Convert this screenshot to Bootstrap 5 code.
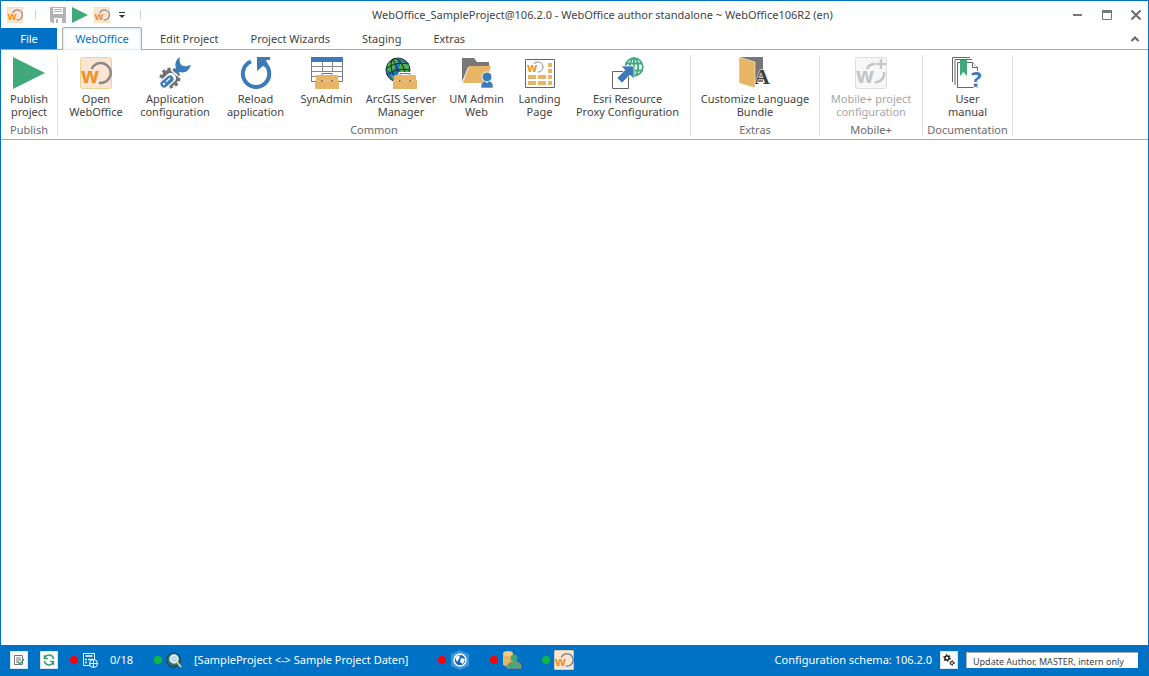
<!DOCTYPE html>
<html lang="en">
<head>
<meta charset="utf-8">
<meta name="viewport" content="width=device-width, initial-scale=1">
<title>WebOffice author standalone</title>
<link href="https://cdn.jsdelivr.net/npm/bootstrap@5.3.0/dist/css/bootstrap.min.css" rel="stylesheet">
<style>
:root { --brand: #0072c6; --line: #ababab; --ink: #444; }
body { font-family: "Noto Sans", "Open Sans", sans-serif; font-size: 11px; line-height: 16px; color: var(--ink); }
.app-window { border: 1px solid var(--brand); border-bottom: 0; min-height: 100vh; }
svg { display: block; flex: none; }
button { color: inherit; background: none; border: 0; padding: 0; line-height: inherit; }

.title-bar { height: 27px; padding: 0 6px; }
.quick-tools { gap: 6px; }
.quick-sep { width: 1px; height: 9px; background: #d0d0d0; margin: 0 6px; }
.save-btn { margin-left: 2px; }
.window-tools { gap: 17px; padding-left: 14px; }

.ribbon-tabs { height: 22px; border-bottom: 1px solid var(--line); }
.ribbon-tabs .nav-link { height: 22px; font-size: 11px; line-height: 22px; padding: 0 16px; color: var(--ink); border: 0; }
.ribbon-tabs .file-tab { background: var(--brand); color: #fff; width: 56px; height: 21px; padding: 0; text-align: center; border-radius: 0; margin-right: 5px; align-self: end; }
.ribbon-tabs .active { height: 23px; width: 80px; padding: 0; text-align: center; color: var(--brand); background: #fff; border: 1px solid var(--line); border-bottom: 0; border-radius: 3px 3px 0 0; margin: -1px 2px -1px 0; box-shadow: inset 0 0 2px 1px #d3ecfa; }

.ribbon { height: 90px; border-bottom: 1px solid var(--line); padding: 5px 0 3px; line-height: 13px; }
.ribbon-group { display: grid; grid-template-rows: 1fr 13px; border-right: 1px solid #e0e0e0; }
.ribbon-caption { text-align: center; color: #6a6a6a; }
.ribbon-items { display: grid; justify-content: center; }
.publish-group { width: 57px; }
.common-group { width: 633px; }
.common-group .ribbon-items { grid-template-columns: 71px 87px 74px 68px 81px 70px 56px 120px; }
.language-group { width: 129px; }
.mobile-group { width: 103px; }
.manual-group { width: 90px; }
.ribbon-btn { display: flex; flex-direction: column; align-items: center; justify-content: start; gap: 3px; padding-top: 2px; white-space: nowrap; }
.ribbon-btn:disabled { color: #a6a6a6; }

.status-bar { height: 31px; background: var(--brand); color: #fff; padding: 0 10px 1px 9px; }
.status-left { gap: 12px; }
.status-item { gap: 4px; }
.status-item + .status-item, .status-text + .status-item { margin-left: 8px; }
.status-text { min-width: 24px; }
.status-project { min-width: 224px; }
.status-right { gap: 8px; }
.status-box { width: 18px; height: 18px; background: #fff; border: 1px solid #d5e5f2; display: grid; place-items: center; color: #222; }
.dot { width: 8px; height: 8px; border-radius: 50%; background: #f00; flex: none; }
.dot-ok { background: #0db83c; }
.update-box { width: 172px; height: 16px; border: 1px solid #ababab; border-width: 1px 0 0 1px; padding: 2px 0 0 6px; font-size: 9px; line-height: 13px; color: var(--ink); background: #fff; }
</style>
</head>
<body>
<svg width="0" height="0" class="position-absolute" aria-hidden="true">
  <symbol id="logo" viewBox="0 0 32 32">
    <rect x=".5" y=".5" width="31" height="31" rx="2" fill="#fce5d3" stroke="#efd092"/>
    <path d="M11.500 12A10 10 0 1 1 19 25.800" fill="none" stroke="#8b8884" stroke-width="2.500"/>
    <text x="1" y="26" font-size="21" font-weight="700" fill="#ed922b">w</text>
  </symbol>
  <symbol id="play" viewBox="0 0 32 32"><path d="M0 0 32 16 0 32z" fill="#40a97c"/></symbol>
  <symbol id="case" viewBox="0 0 24 17">
    <path d="M7 3V1.500h10V3" fill="none" stroke="#fff" stroke-width="3"/>
    <path d="M7 3V1.500h10V3" fill="none" stroke="#777"/>
    <path d="M2 3h20q1 0 1 1v4h1v9H0V8h1V4q0-1 1-1z" fill="#e8b465"/>
    <path d="M1 8.500h22" stroke="#f3d29c" stroke-width=".5"/><path d="M6 8h1.500v1.500H6zM16.500 8H18v1.500h-1.500z" fill="#666"/>
  </symbol>
  <symbol id="webglobe" viewBox="0 0 20 20">
    <circle cx="10" cy="10" r="8.800"/><ellipse cx="10" cy="10" rx="4.200" ry="8.800"/><path d="M10 1v18M2 6.500h16M2 13.500h16"/>
  </symbol>
</svg>

<div class="app-window d-flex flex-column">
  <header class="title-bar d-flex align-items-center">
    <div class="quick-tools d-flex align-items-center">
      <svg width="16" height="16"><use href="#logo"/></svg>
      <span class="quick-sep"></span>
      <button type="button" class="save-btn" aria-label="Save"><svg width="16" height="16" viewBox="0 0 16 16"><path d="M0 0h16v16H2l-2-2z" fill="#b3b3b3"/><path d="M3 1h10v6H3zM4 11h8v5H4z" fill="#fff"/><path d="M4 2h8v1H4zM4 4h8v1H4zM6 12h2v4H6z" fill="#b3b3b3"/></svg></button>
      <button type="button" aria-label="Publish"><svg width="16" height="16"><use href="#play"/></svg></button>
      <button type="button" aria-label="Open WebOffice"><svg width="16" height="16"><use href="#logo"/></svg></button>
      <button type="button" aria-label="Customize toolbar"><svg width="12" height="8" viewBox="0 0 12 8"><path d="M3 1.500h6" stroke="#333"/><path d="M3 4h6L6 7z" fill="#333"/></svg></button>
      <span class="quick-sep"></span>
    </div>
    <div class="flex-grow-1 text-center text-nowrap">WebOffice_SampleProject@106.2.0 - WebOffice author standalone ~ WebOffice106R2 (en)</div>
    <div class="window-tools d-flex align-items-center">
      <button type="button" aria-label="Minimize"><svg width="12" height="12"><path d="M1 6h9" stroke="#777" stroke-width="2"/></svg></button>
      <button type="button" aria-label="Maximize"><svg width="12" height="12"><path d="M1.500 1.500h9v9h-9z" fill="none" stroke="#777"/><path d="M1 1h10v3H1z" fill="#777"/></svg></button>
      <button type="button" aria-label="Close"><svg width="12" height="12"><path d="m1.500 1.500 9 9m0-9-9 9" stroke="#6e6e6e" stroke-width="2"/></svg></button>
    </div>
  </header>

  <nav class="ribbon-tabs nav flex-nowrap" aria-label="Ribbon">
    <a class="nav-link file-tab" href="#">File</a>
    <a class="nav-link active" href="#" aria-current="page">WebOffice</a>
    <a class="nav-link" href="#">Edit Project</a>
    <a class="nav-link" href="#">Project Wizards</a>
    <a class="nav-link" href="#">Staging</a>
    <a class="nav-link" href="#">Extras</a>
    <button type="button" class="ms-auto me-2" aria-label="Collapse ribbon"><svg width="10" height="8"><path d="m1.500 6 3.500-3.500L8.500 6" fill="none" stroke="#666" stroke-width="2"/></svg></button>
  </nav>

  <div class="ribbon d-flex">
    <section class="ribbon-group publish-group">
      <div class="ribbon-items">
        <button type="button" class="ribbon-btn"><svg width="32" height="32"><use href="#play"/></svg><span>Publish<br>project</span></button>
      </div>
      <div class="ribbon-caption">Publish</div>
    </section>

    <section class="ribbon-group common-group">
      <div class="ribbon-items">
        <button type="button" class="ribbon-btn"><svg width="32" height="32"><use href="#logo"/></svg><span>Open<br>WebOffice</span></button>
        <button type="button" class="ribbon-btn"><svg width="32" height="32" viewBox="0 0 32 32">
          <circle cx="11" cy="21" r="9" fill="none" stroke="#707070" stroke-width="3" stroke-dasharray="3 2.655"/>
          <circle cx="11" cy="21" r="6.500" fill="none" stroke="#707070" stroke-width="4"/>
          <path d="M12 21 5 27" stroke="#fff" stroke-width="10" stroke-linecap="round"/>
          <path d="M11 22 5 27" stroke="#3c7ab8" stroke-width="7" stroke-linecap="round"/>
          <path d="M21 0A8.500 8.500 0 0 0 17 11l-3 3 3 3 4-2q7 2 10-5l1-2-4 1q-5 1-7-3-1-3 0-6z" fill="#3c7ab8"/>
          <path d="m12 13 7 6" stroke="#fff" stroke-width="1.500"/>
          <path d="m11 21-4 4" stroke="#fff" stroke-width="1.200"/><circle cx="5" cy="27" r="1.200" fill="#fff"/></svg><span>Application<br>configuration</span></button>
        <button type="button" class="ribbon-btn"><svg width="32" height="32" viewBox="0 0 32 32"><path d="M11 4.500A13.200 13.200 0 1 0 25 7" fill="none" stroke="#3c7ab8" stroke-width="4"/><path d="M17 0h13v3h-4l4 9-7-3-6 5z" fill="#3c7ab8"/></svg><span>Reload<br>application</span></button>
        <button type="button" class="ribbon-btn"><svg width="32" height="32" viewBox="0 0 32 32"><path d="M.5.500h31v24H.5z" fill="#fff" stroke="#777"/><path d="M0 0h32v5H0z" fill="#3c7ab8"/><path d="M11.500 5v20M21.500 5v20M0 9.500h32M0 14.500h32M0 19.500h32" stroke="#888"/><use href="#case" x="4" y="15" width="24" height="17"/></svg><span>SynAdmin</span></button>
        <button type="button" class="ribbon-btn"><svg width="32" height="32" viewBox="0 0 32 32"><circle cx="13" cy="13" r="12" fill="#2476ba" stroke="#333"/><path d="M3 7q8-7 11-5l-3 5-3 8-6-2zM16 4l8 4-1 10-7-2-2-5zM6 18l6 1 2 6-6-3z" fill="#4eb749"/><g fill="none" stroke="#142b38" stroke-width="1"><ellipse cx="13" cy="13" rx="6" ry="12" transform="rotate(-20 13 13)"/><path d="m8 2 9 22M1 12q9-8 23-5M2 18q9-8 23-5"/></g><circle cx="20" cy="27" r="12" fill="#fff"/><use href="#case" x="8" y="15" width="24" height="17"/></svg><span>ArcGIS Server<br>Manager</span></button>
        <button type="button" class="ribbon-btn"><svg width="32" height="32" viewBox="0 0 32 32"><path d="M1 25V1h12l3 4h12v5H7z" fill="#777"/><path d="M8 9h22l-5 17H2z" fill="#e8b465"/><circle cx="26" cy="20" r="5" fill="#3c7ab8" stroke="#fff"/><path d="M20 31v-3q1-4 4-4l2 2 2-2q3 0 4 4v3z" fill="#3c7ab8" stroke="#fff" stroke-width=".6"/></svg><span>UM Admin<br>Web</span></button>
        <button type="button" class="ribbon-btn"><svg width="32" height="32" viewBox="0 0 32 32"><path d="M1.500 2.500h29v28h-29z" fill="#fff" stroke="#666"/><path d="M24 6h4v4h-4zM24 12h4v4h-4zM4 18h8v4H4zM14 18h8v4h-8zM24 18h4v4h-4zM4 24h8v4H4zM14 24h8v4h-8zM24 24h4v4h-4z" fill="#e8b465"/><path d="M10 7a5 5 0 1 1 4 8" fill="none" stroke="#888"/><text x="3" y="15" font-size="12" font-weight="700" fill="#ed922b">w</text></svg><span>Landing<br>Page</span></button>
        <button type="button" class="ribbon-btn"><svg width="32" height="32" viewBox="0 0 32 32"><path d="M.5 14.500h16v17H.5z" fill="#fff" stroke="#666"/><use href="#webglobe" x="12" y="0" width="20" height="20" fill="none" stroke="#40a97c" stroke-width="1.800"/><path d="M9 9h13v13l-4-4-8 8-5-5 8-8z" fill="#3c7ab8" stroke="#fff" stroke-width=".7"/></svg><span>Esri Resource<br>Proxy Configuration</span></button>
      </div>
      <div class="ribbon-caption">Common</div>
    </section>

    <section class="ribbon-group language-group">
      <div class="ribbon-items">
        <button type="button" class="ribbon-btn"><svg width="32" height="32" viewBox="0 0 32 32"><path d="M2 0h22v25H2z" fill="#777"/><text x="15" y="27" font-family="Liberation Serif" font-size="22" font-weight="700" fill="#3f3f3f" stroke="#fff" stroke-width="1" paint-order="stroke">A</text><path d="m0 0 16 5v26L0 26z" fill="#e8b465" stroke="#fff" stroke-width=".5"/></svg><span>Customize Language<br>Bundle</span></button>
      </div>
      <div class="ribbon-caption">Extras</div>
    </section>

    <section class="ribbon-group mobile-group">
      <div class="ribbon-items">
        <button type="button" class="ribbon-btn" disabled><svg width="32" height="32" viewBox="0 0 32 32"><rect x=".5" y=".5" width="31" height="31" rx="2" fill="#f7f7f7" stroke="#ddd"/><path d="M12 12q2-5 8-5M29 15q1 9-9 10.500" fill="none" stroke="#c4c4c4" stroke-width="2.500"/><text x="1" y="26" font-size="21" font-weight="700" fill="#c4c4c4">w</text><path d="M26 2v10M21 7h10" stroke="#c9c9c9" stroke-width="2.500"/></svg><span>Mobile+ project<br>configuration</span></button>
      </div>
      <div class="ribbon-caption">Mobile+</div>
    </section>

    <section class="ribbon-group manual-group">
      <div class="ribbon-items">
        <button type="button" class="ribbon-btn"><svg width="32" height="32" viewBox="0 0 32 32"><g fill="#fff" stroke="#666"><path d="M.5 25V.500H18M3 28V2.500h17"/><path d="M5.500 5.500h15l5 5v20h-20z"/><path d="M20.500 5.500v5h5"/></g><path d="M8 3h7v16l-3.500-4L8 19z" fill="#40a97c"/><text x="19" y="30" font-size="22" font-weight="700" fill="#3c7ab8" stroke="#fff" stroke-width="2" paint-order="stroke">?</text></svg><span>User<br>manual</span></button>
      </div>
      <div class="ribbon-caption">Documentation</div>
    </section>
  </div>

  <main class="flex-grow-1 bg-white"></main>

  <footer class="status-bar d-flex align-items-center justify-content-between text-nowrap">
    <div class="status-left d-flex align-items-center">
      <button type="button" class="status-box" aria-label="Check"><svg width="12" height="12"><path d="M1.500 1.500h8v9h-8z" fill="none" stroke="#777"/><path d="M3 4h5M3 6h5M3 8h3" stroke="#777"/><path d="m5 8 2 2 4-5" fill="none" stroke="#3c9c78" stroke-width="1.500"/></svg></button>
      <button type="button" class="status-box" aria-label="Refresh"><svg width="12" height="12" fill="none" stroke="#2f9e70" stroke-width="1.500"><path d="M10.500 5A4.500 4.500 0 0 0 2 3.500M1.500 7A4.500 4.500 0 0 0 10 8.500M1.500 1v3.500H5M10.500 11V7.500H7"/></svg></button>
      <div class="status-item d-flex align-items-center m-0"><span class="dot"></span>
        <svg width="16" height="16"><path d="M1.500 1.500h11v12h-11z" fill="none" stroke="#fff"/><path d="M3.500 4h7M3 7.500h2M3 10.500h2M6 7.500h5" stroke="#fff" stroke-width="1.500"/><circle cx="11.500" cy="11.500" r="4" fill="#0072c6" stroke="#fff"/><path d="M11.500 8v8M8 11.500h8" stroke="#fff"/></svg></div>
      <span class="status-text">0/18</span>
      <div class="status-item d-flex align-items-center"><span class="dot dot-ok"></span>
        <svg width="16" height="16"><circle cx="7.500" cy="8" r="7" fill="#286d72" stroke="#163e58"/><circle cx="8" cy="7" r="4" fill="#b9dde6" stroke="#eee" stroke-width="1.500"/><path d="m11 10 4 5" stroke="#ead179" stroke-width="2"/></svg></div>
      <span class="status-text status-project">[SampleProject &lt;-&gt; Sample Project Daten]</span>
      <div class="status-item d-flex align-items-center"><span class="dot"></span>
        <svg width="20" height="20"><path d="m10 0 9 4v12l-9 4-9-4V4z" fill="#3d91dd"/><circle cx="10" cy="10" r="6" fill="#1768b5" stroke="#fff" stroke-width="1.500"/><path d="m5 7 5-2-1 4-2 3zM11 8l4 1-2 5-3-2z" fill="#fff"/></svg></div>
      <div class="status-item d-flex align-items-center"><span class="dot"></span>
        <svg width="20" height="20"><path d="M1 3v12q5 3 10 0V3z" fill="#e8b465"/><ellipse cx="6" cy="3.500" rx="5" ry="2.500" fill="#f5ca82"/><circle cx="12" cy="8" r="3.500" fill="#40a97c"/><path d="M5 18q0-5 4-6h6q4 1 4 6z" fill="#40a97c" stroke="#b98f4d"/></svg></div>
      <div class="status-item d-flex align-items-center"><span class="dot dot-ok"></span>
        <svg width="20" height="20"><use href="#logo"/></svg></div>
    </div>
    <div class="status-right d-flex align-items-center">
      <span>Configuration schema: 106.2.0</span>
      <button type="button" class="status-box" aria-label="Settings"><svg width="12" height="12" fill="none" stroke="#222"><circle cx="4" cy="4" r="2" stroke-width="1.500"/><circle cx="4" cy="4" r="3" stroke-width="1.500" stroke-dasharray="1.500 1.641"/><circle cx="9" cy="9" r="1.500"/><circle cx="9" cy="9" r="2.300" stroke-dasharray="1 1.400"/></svg></button>
      <button type="button" class="update-box text-start">Update Author, MASTER, intern only</button>
    </div>
  </footer>
</div>
<script src="https://cdn.jsdelivr.net/npm/bootstrap@5.3.0/dist/js/bootstrap.bundle.min.js"></script>
</body>
</html>
